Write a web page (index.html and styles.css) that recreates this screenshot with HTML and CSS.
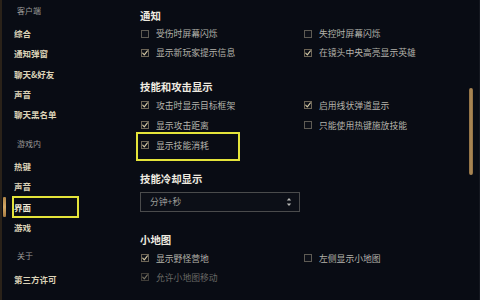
FILE: index.html
```html
<!DOCTYPE html>
<html lang="zh-CN">
<head>
<meta charset="utf-8">
<title>设置 - 界面</title>
<link rel="stylesheet" href="styles.css">
</head>
<body>
<div class="app">
  <nav class="sidebar">
    <div class="group-title g1">客户端</div>
    <div class="nav-list n1">
      <div class="nav-item">综合</div>
      <div class="nav-item">通知弹窗</div>
      <div class="nav-item">聊天&amp;好友</div>
      <div class="nav-item">声音</div>
      <div class="nav-item">聊天黑名单</div>
    </div>
    <div class="group-title g2">游戏内</div>
    <div class="nav-list n2">
      <div class="nav-item">热键</div>
      <div class="nav-item">声音</div>
      <div class="nav-item active">界面<span class="indicator"></span><span class="mark mark-nav"></span></div>
      <div class="nav-item">游戏</div>
    </div>
    <div class="group-title g3">关于</div>
    <div class="nav-list">
      <div class="nav-item">第三方许可</div>
    </div>
  </nav>

  <main class="content">
    <section class="section sec-1">
      <h2 class="heading">通知</h2>
      <div class="grid">
        <div class="opt"><svg class="cb" viewBox="0 0 8 8"><rect x=".5" y=".5" width="7" height="7"/></svg>受伤时屏幕闪烁</div>
        <div class="opt"><svg class="cb" viewBox="0 0 8 8"><rect x=".5" y=".5" width="7" height="7"/></svg>失控时屏幕闪烁</div>
        <div class="opt"><svg class="cb on" viewBox="0 0 8 8"><rect x=".5" y=".5" width="7" height="7"/><path d="M1.7 4.2 3.3 5.8 6.4 1.9"/></svg>显示新玩家提示信息</div>
        <div class="opt"><svg class="cb on" viewBox="0 0 8 8"><rect x=".5" y=".5" width="7" height="7"/><path d="M1.7 4.2 3.3 5.8 6.4 1.9"/></svg>在镜头中央高亮显示英雄</div>
      </div>
    </section>

    <section class="section sec-2">
      <h2 class="heading">技能和攻击显示</h2>
      <div class="grid tall">
        <div class="opt"><svg class="cb on" viewBox="0 0 8 8"><rect x=".5" y=".5" width="7" height="7"/><path d="M1.7 4.2 3.3 5.8 6.4 1.9"/></svg>攻击时显示目标框架</div>
        <div class="opt"><svg class="cb on" viewBox="0 0 8 8"><rect x=".5" y=".5" width="7" height="7"/><path d="M1.7 4.2 3.3 5.8 6.4 1.9"/></svg>启用线状弹道显示</div>
        <div class="opt"><svg class="cb on" viewBox="0 0 8 8"><rect x=".5" y=".5" width="7" height="7"/><path d="M1.7 4.2 3.3 5.8 6.4 1.9"/></svg>显示攻击距离</div>
        <div class="opt"><svg class="cb" viewBox="0 0 8 8"><rect x=".5" y=".5" width="7" height="7"/></svg>只能使用热键施放技能</div>
        <div class="opt"><svg class="cb on" viewBox="0 0 8 8"><rect x=".5" y=".5" width="7" height="7"/><path d="M1.7 4.2 3.3 5.8 6.4 1.9"/></svg>显示技能消耗<span class="mark mark-opt"></span></div>
      </div>
    </section>

    <section class="section sec-3">
      <h2 class="heading">技能冷却显示</h2>
      <div class="select">
        <span class="select-text">分钟+秒</span>
        <svg class="arrows" viewBox="0 0 6 10"><path d="M3 1 5.2 3.6H.8Z"/><path d="M3 9 5.2 6.4H.8Z"/></svg>
      </div>
    </section>

    <section class="section sec-4">
      <h2 class="heading">小地图</h2>
      <div class="grid">
        <div class="opt"><svg class="cb on" viewBox="0 0 8 8"><rect x=".5" y=".5" width="7" height="7"/><path d="M1.7 4.2 3.3 5.8 6.4 1.9"/></svg>显示野怪营地</div>
        <div class="opt"><svg class="cb" viewBox="0 0 8 8"><rect x=".5" y=".5" width="7" height="7"/></svg>左侧显示小地图</div>
        <div class="opt dim"><svg class="cb on" viewBox="0 0 8 8"><rect x=".5" y=".5" width="7" height="7"/><path d="M1.7 4.2 3.3 5.8 6.4 1.9"/></svg>允许小地图移动</div>
      </div>
    </section>
  </main>

  <div class="scrollbar"><div class="thumb"></div></div>
</div>
</body>
</html>
```

FILE: styles.css
```css
* { box-sizing: border-box; }

html, body {
  margin: 0;
  padding: 0;
  width: 480px;
  height: 300px;
  overflow: hidden;
  background: #090c14;
}

body {
  font-family: "Noto Sans CJK SC", "Noto Sans", sans-serif;
  color: #b9b7ae;
}

.app {
  display: flex;
  width: 480px;
  height: 300px;
  border-left: 2px solid #2a2219;
  border-right: 1px solid #151820;
  background: #090c14;
}

/* ---------- sidebar ---------- */
.sidebar {
  width: 128px;
  flex: none;
  display: flex;
  flex-direction: column;
}

.group-title {
  height: 20px;
  display: flex;
  align-items: center;
  padding-left: 15px;
  font-size: 8px;
  color: #9b9b98;
}

.g1 { margin-bottom: 2.8px; }
.g2 { margin-top: 9.7px; margin-bottom: 1.75px; }
.g3 { margin-top: 8.2px; margin-bottom: 2.75px; }

.nav-item {
  position: relative;
  height: 20.3px;
  display: flex;
  align-items: center;
  padding-left: 12px;
  font-size: 8.5px;
  font-weight: 700;
  color: #dcd3b8;
}

.n2 .nav-item { height: 20.5px; }

.nav-item.active { color: #ece6d2; }

.indicator {
  position: absolute;
  left: 1px;
  top: 0;
  width: 3px;
  height: 20px;
  border-radius: 1px;
  background: linear-gradient(#b08548, #d4a866, #a57a40);
}

/* yellow annotation boxes */
.mark {
  position: absolute;
  border: 2px solid #e4e43a;
  pointer-events: none;
}

.mark-nav {
  left: 10px;
  top: -1px;
  width: 67px;
  height: 22px;
}

.mark-opt {
  left: -5px;
  top: -3px;
  width: 104px;
  height: 29px;
}

/* ---------- content ---------- */
.content {
  flex: 1;
  padding-top: 6px;
  padding-left: 10px;
  display: flex;
  flex-direction: column;
}

.heading {
  margin: 0;
  height: 18px;
  display: flex;
  align-items: center;
  font-size: 10.4px;
  font-weight: 700;
  color: #eeeae0;
}

.sec-2 { margin-top: 15px; }
.sec-3 { margin-top: 14px; }
.sec-4 { margin-top: 19px; }

.grid {
  display: grid;
  grid-template-columns: 163px 1fr;
  grid-auto-rows: 19px;
  margin-left: 1px;
}

.grid.tall { grid-auto-rows: 20px; }

.opt {
  position: relative;
  display: flex;
  align-items: center;
  font-size: 8.8px;
  color: #b4b3ab;
  white-space: nowrap;
}

.opt.dim { color: #686864; }
.opt.dim .cb { opacity: 0.55; }

.cb {
  width: 8px;
  height: 8px;
  flex: none;
  margin-right: 7px;
}

.cb rect {
  fill: #0d1018;
  stroke: #5e5b54;
  stroke-width: 1;
}

.cb.on rect { stroke: #6d6556; }

.cb path {
  fill: none;
  stroke: #d6caa6;
  stroke-width: 1.1;
  stroke-linecap: round;
  stroke-linejoin: round;
}

/* dropdown */
.select {
  margin-top: 4.5px;
  width: 160px;
  height: 20px;
  border: 1px solid #4a4b4c;
  background: #0c0f17;
  display: flex;
  align-items: center;
  justify-content: space-between;
  padding: 0 7px 0 9px;
}

.select-text {
  font-size: 8.8px;
  color: #9c9c98;
}

.arrows {
  width: 6px;
  height: 10px;
}

.arrows path { fill: #b9b9b6; }

/* scrollbar */
.scrollbar {
  width: 10px;
  flex: none;
  padding-top: 88px;
}

.thumb {
  width: 4px;
  height: 87px;
  border-radius: 2px;
  background: linear-gradient(90deg, #8c6d42, #b08c58, #8c6d42);
}
```
